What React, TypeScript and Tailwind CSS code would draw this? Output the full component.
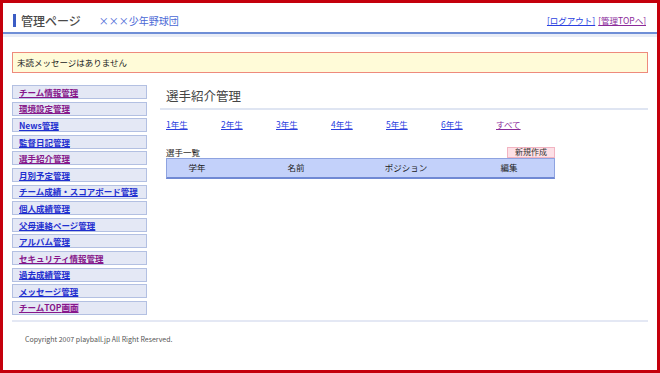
const menu = [
  { label: "チーム情報管理", visited: true },
  { label: "環境設定管理", visited: true },
  { label: "News管理", visited: false },
  { label: "監督日記管理", visited: false },
  { label: "選手紹介管理", visited: true },
  { label: "月別予定管理", visited: false },
  { label: "チーム成績・スコアボード管理", visited: false },
  { label: "個人成績管理", visited: false },
  { label: "父母連絡ページ管理", visited: false },
  { label: "アルバム管理", visited: false },
  { label: "セキュリティ情報管理", visited: true },
  { label: "過去成績管理", visited: false },
  { label: "メッセージ管理", visited: false },
  { label: "チームTOP画面", visited: true },
];

const grades = ["1年生", "2年生", "3年生", "4年生", "5年生", "6年生"];

export default function App() {
  return (
    <div
      className="w-[660px] h-[373px] overflow-hidden border-[3px] border-[#c4000c] bg-white"
      style={{ fontFamily: '"Noto Sans CJK JP", "Liberation Sans", sans-serif' }}
    >
      {/* HEADER */}
      <header className="h-[29px] flex items-center pl-[10px] pr-[11px] pt-[6px]">
        <span className="w-[3px] h-[13px] bg-[#3b5cc4]" />
        <span className="ml-[5px] text-[12px] leading-none font-medium text-[#4a4a4a]">管理ページ</span>
        <span className="ml-[18px] text-[10px] leading-none text-[#4a68d6]">×××少年野球団</span>
        <div className="ml-auto flex gap-[3px] text-[8.5px] leading-none">
          <a href="#" className="text-[#2b3fe0] underline">[ログアウト]</a>
          <a href="#" className="text-[#8a2a9a] underline">[管理TOPへ]</a>
        </div>
      </header>
      <div className="h-[2px] bg-[#6f8ed6]" />
      <div className="h-[3px] bg-[#e9edf7]" />

      {/* MESSAGE */}
      <div className="mt-[15px] mx-[9px] h-[21px] flex items-center px-[4px] bg-[#fffbd8] border border-[#ee8a7c] text-[8.5px] text-[#222]">
        未読メッセージはありません
      </div>

      {/* BODY */}
      <div className="mt-[12px] mx-[9px] flex">
        <nav className="w-[135px] flex flex-col gap-[2.6px]">
          {menu.map((m) => (
            <a
              key={m.label}
              href="#"
              className={`h-[14px] flex items-center px-[6px] bg-[#e4e8f5] border border-[#b3c0e2] text-[8.5px] font-bold underline leading-none ${
                m.visited ? "text-[#86168a]" : "text-[#1f2fd0]"
              }`}
            >
              {m.label === "チームTOP画面" ? (
                <>
                  チームTOP<span className="bg-[#d9b8e6]">画面</span>
                </>
              ) : (
                m.label
              )}
            </a>
          ))}
        </nav>

        <main className="flex-1 ml-[13px]">
          <h2 className="pl-[6px] pt-[5px] h-[23px] text-[12.5px] leading-none text-[#444]">選手紹介管理</h2>
          <div className="h-[2px] bg-[#dfe5f2]" />

          <div className="mt-[10px] pl-[6px] flex text-[8.5px] leading-none">
            {grades.map((g) => (
              <a key={g} href="#" className="w-[55px] text-[#2b3fe0] underline">
                {g}
              </a>
            ))}
            <a href="#" className="text-[#8a2a9a] underline">すべて</a>
          </div>

          <div className="mt-[18px] ml-[6px] w-[389px]">
            <div className="flex items-end h-[11px]">
              <span className="text-[8.5px] leading-none text-[#222] pb-[1px]">選手一覧</span>
              <span className="ml-auto w-[48px] h-[11px] flex items-center justify-center bg-[#fde0e6] border border-[#f2b4c2] text-[8px] leading-none text-[#333]">
                新規作成
              </span>
            </div>
            <div className="h-[21px] grid grid-cols-[60px_138px_82px_109px] items-center bg-[#c3d1fa] border border-[#8ea3e0] border-b-2 border-b-[#7089d4] text-[8.5px] leading-none text-[#222]">
              <span className="text-center">学年</span>
              <span className="text-center">名前</span>
              <span className="text-center">ポジション</span>
              <span className="text-center pl-[15px]">編集</span>
            </div>
          </div>
        </main>
      </div>

      {/* FOOTER */}
      <div className="mt-[5px] mx-[9px] h-[2px] bg-[#e4e8f4]" />
      <p className="mt-[14px] ml-[22px] text-[7px] leading-none text-[#555]">
        Copyright 2007 playball.jp All Right Reserved.
      </p>
    </div>
  );
}
